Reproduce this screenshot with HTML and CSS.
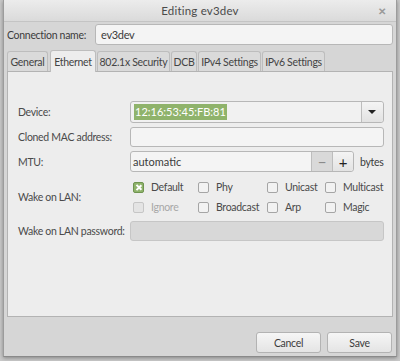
FILE: index.html
```html
<!DOCTYPE html>
<html lang="en">
<head>
  <meta charset="UTF-8">
  <title>Editing ev3dev</title>
  <link rel="stylesheet" href="styles.css">
</head>
<body>
  <div class="window">
    <div class="titlebar">
      <span class="title">Editing ev3dev</span>
      <span class="close">&#x2715;</span>
    </div>
    <div class="content">
      <div class="conn-row">
        <label class="conn-label">Connection name:</label>
        <div class="entry conn-entry">ev3dev</div>
      </div>
      <div class="tabs">
        <div class="tab t-general">General</div>
        <div class="tab t-eth active">Ethernet</div>
        <div class="tab t-sec">802.1x Security</div>
        <div class="tab t-dcb">DCB</div>
        <div class="tab t-ip">IPv4 Settings</div>
        <div class="tab t-ip">IPv6 Settings</div>
      </div>
      <div class="panel">
        <div class="form">
          <span class="lbl">Device:</span>
          <div class="combo">
            <div class="combo-text"><span class="sel">12:16:53:45:FB:81</span></div>
            <div class="combo-btn"><span class="arrow"></span></div>
          </div>

          <span class="lbl">Cloned MAC address:</span>
          <div class="entry"></div>

          <span class="lbl">MTU:</span>
          <div class="mtu">
            <div class="spin">
              <div class="spin-text">automatic</div>
              <div class="spin-btn minus">&minus;</div>
              <div class="spin-btn plus">+</div>
            </div>
            <span class="unit">bytes</span>
          </div>

          <span class="lbl">Wake on LAN:</span>
          <div class="checks">
            <div class="chk"><span class="box on"></span>Default</div>
            <div class="chk"><span class="box"></span>Phy</div>
            <div class="chk"><span class="box"></span>Unicast</div>
            <div class="chk"><span class="box"></span>Multicast</div>
            <div class="chk disabled"><span class="box"></span>Ignore</div>
            <div class="chk"><span class="box"></span>Broadcast</div>
            <div class="chk"><span class="box"></span>Arp</div>
            <div class="chk"><span class="box"></span>Magic</div>
          </div>

          <span class="lbl">Wake on LAN password:</span>
          <div class="entry insensitive"></div>
        </div>
      </div>
      <div class="buttons">
        <button class="btn">Cancel</button>
        <button class="btn">Save</button>
      </div>
    </div>
  </div>
</body>
</html>
```

FILE: styles.css
```css
html, body { margin: 0; height: 100%; }
body { background: #c9c9c9; font-family: Lato, "Liberation Sans", sans-serif; font-size: 10.5px; letter-spacing: -0.3px; color: #3c3c3c; overflow: hidden; white-space: nowrap; }
.window { margin: 0 3px 0 3px; height: 357px; background: #d6d6d6; border-left: 1px solid #9c9c9c; border-right: 1px solid #9c9c9c; border-bottom: 1px solid #8a8a8a; box-shadow: 0 1px 4px rgba(0,0,0,0.35); display: flex; flex-direction: column; box-sizing: border-box; }
.titlebar { height: 22px; flex: none; background: linear-gradient(#ececec, #dadada); border-bottom: 1px solid #c4c4c4; display: flex; align-items: center; justify-content: center; position: relative; box-sizing: border-box; }
.title { font-size: 11.5px; color: #4a4a4a; letter-spacing: 0.2px; }
.close { position: absolute; right: 10px; top: 5px; font-size: 10px; color: #9a9a9a; font-weight: bold; }
.content { flex: 1; display: flex; flex-direction: column; padding: 2px 3px 4px 3px; }
.conn-row { display: flex; align-items: center; gap: 9px; height: 21px; }
.conn-label { width: 79px; }
.entry { height: 20px; background: #f4f4f4; border: 1px solid #b7b7b7; border-radius: 3px; box-sizing: border-box; padding: 0 5px; display: flex; align-items: center; font-size: 11px; }
.conn-entry { flex: 1; height: 21px; }
.entry.insensitive { background: #d8d8d8; border-color: #c6c6c6; }
.tabs { display: flex; align-items: flex-end; gap: 1px; margin-top: 4px; height: 22px; }
.tab { height: 20px; background: #dadada; border: 1px solid #bdbdbd; border-bottom: none; border-radius: 3px 3px 0 0; box-sizing: border-box; display: flex; align-items: center; justify-content: center; color: #444; }
.t-general { width: 41px; }
.t-eth { width: 46px; margin-left: 1px; }
.t-sec { width: 73px; }
.t-dcb { width: 26px; }
.t-ip { width: 63px; }
.tab.active { height: 22px; background: #ededed; position: relative; top: 1px; z-index: 1; }
.panel { height: 246px; background: #ededed; border: 1px solid #b3b3b3; box-sizing: border-box; padding: 29px 10px 0 10px; }
.form { display: grid; grid-template-columns: 112px 1fr; row-gap: 4px; align-items: center; }
.lbl { color: #4a4a4a; }
.combo { height: 22px; display: flex; border: 1px solid #b7b7b7; border-radius: 3px; background: #f1f1f1; box-sizing: border-box; }
.combo-text { flex: 1; display: flex; align-items: center; padding-left: 3px; font-size: 11px; letter-spacing: 0; }
.sel { background: #8fb36b; color: #fff; padding: 0 1px; line-height: 16px; }
.combo-btn { width: 21px; border-left: 1px solid #bdbdbd; background: linear-gradient(#f4f4f4, #e2e2e2); display: flex; align-items: center; justify-content: center; border-radius: 0 3px 3px 0; }
.arrow { width: 0; height: 0; border-left: 4px solid transparent; border-right: 4px solid transparent; border-top: 4px solid #222; }
.mtu { display: flex; align-items: center; gap: 6px; }
.spin { flex: none; width: 224px; height: 21px; display: flex; border: 1px solid #b7b7b7; border-radius: 3px; background: #f4f4f4; box-sizing: border-box; }
.spin-text { flex: 1; display: flex; align-items: center; padding-left: 2px; font-size: 11px; letter-spacing: 0; }
.spin-btn { width: 20px; display: flex; align-items: center; justify-content: center; border-left: 1px solid #bdbdbd; font-size: 15px; }
.spin-btn.minus { background: #d9d9d9; color: #8a8a8a; }
.spin-btn.plus { background: linear-gradient(#f4f4f4, #e3e3e3); color: #222; border-radius: 0 3px 3px 0; }
.checks { display: grid; grid-template-columns: 65px 69px 58px 1fr; row-gap: 8px; padding: 5px 0 4px 3px; }
.chk { display: flex; align-items: center; gap: 7px; color: #4a4a4a; height: 12px; }
.chk.disabled { color: #a8a8a8; }
.box { width: 11px; height: 11px; border: 1px solid #a5a5a5; border-radius: 2px; background: #f2f2f2; box-sizing: border-box; flex: none; }
.chk.disabled .box { border-color: #c6c6c6; background: #e4e4e4; }
.box.on { background: #8fb36b; border-color: #6f9450; position: relative; }
.box.on::before, .box.on::after { content: ""; position: absolute; left: 4px; top: 1px; width: 1.5px; height: 7px; background: #fff; }
.box.on::before { transform: rotate(45deg); }
.box.on::after { transform: rotate(-45deg); }
.buttons { display: flex; justify-content: flex-end; gap: 6px; margin-top: 15px; padding-right: 1px; }
.btn { width: 65px; height: 21px; font-family: inherit; font-size: 10.5px; letter-spacing: -0.3px; color: #3c3c3c; background: linear-gradient(#f6f6f6, #e4e4e4); border: 1px solid #b3b3b3; border-radius: 3px; padding: 0; }
```
